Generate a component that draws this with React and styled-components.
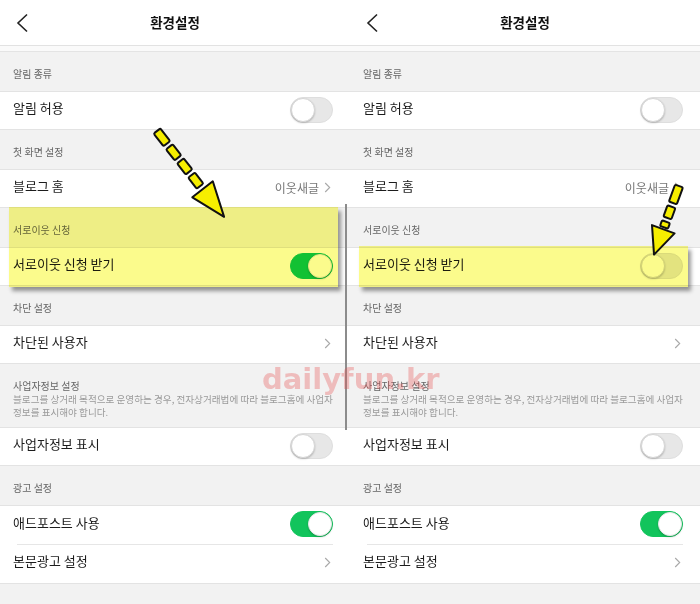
import React from 'react';
import styled, { createGlobalStyle } from 'styled-components';

const Global = createGlobalStyle`
  html, body { margin: 0; padding: 0; background: #fff; }
  body { font-family: "Noto Sans CJK KR", "Noto Sans", sans-serif; }
`;

const Page = styled.div`
  position: relative;
  display: flex;
  width: 700px;
  height: 604px;
  overflow: hidden;
  background: #fff;
`;

const Phone = styled.div`
  position: relative;
  width: 350px;
  flex: none;
  display: flex;
  flex-direction: column;
  background: #f2f2f2;
`;

const Header = styled.header`
  flex: none;
  height: 45px;
  background: #fff;
  border-bottom: 1px solid #e2e2e2;
  display: grid;
  grid-template-columns: 48px 1fr 48px;
  align-items: center;
`;

const BackBtn = styled.div`
  display: flex;
  align-items: center;
  padding-left: 16px;
`;

const Title = styled.h1`
  margin: 0 0 2px;
  text-align: center;
  font-size: 13.5px;
  font-weight: 700;
  color: #111;
`;

const Strip = styled.div`
  flex: none;
  height: 5px;
  background: #fafafa;
  border-bottom: 1px solid #e4e4e4;
`;

const Section = styled.div`
  flex: none;
  box-sizing: border-box;
  display: flex;
  flex-direction: column;
  justify-content: flex-end;
  height: ${p => (p.$tall ? '63px' : '39px')};
  padding: ${p => (p.$tall ? '15px 13px 8px' : '0 13px 10px')};
  background: #f2f2f2;
`;

const Label = styled.div`
  font-size: 10px;
  line-height: 14px;
  color: #666;
`;

const Desc = styled.div`
  font-size: 9.6px;
  line-height: 13px;
  color: #9a9a9a;
  white-space: nowrap;
`;

const Group = styled.div`
  flex: none;
  background: #fff;
  border-top: 1px solid #e3e3e3;
  border-bottom: 1px solid #e3e3e3;
`;

const Row = styled.div`
  position: relative;
  box-sizing: border-box;
  height: 37px;
  display: flex;
  align-items: center;
  justify-content: space-between;
  padding: 0 17px 0 13px;
  &:not(:only-child) {
    height: 38px;
  }
  & + & {
    height: 39px;
  }
  & + &::before {
    content: '';
    position: absolute;
    top: 0;
    left: 17px;
    right: 17px;
    height: 1px;
    background: #e6e6e6;
  }
`;

const RowLabel = styled.span`
  font-size: 13px;
  line-height: 18px;
  margin-top: -5px;
  color: #1c1c1c;
`;

const Value = styled.span`
  display: flex;
  align-items: center;
  gap: 5px;
  margin-top: -3px;
  font-size: 12px;
  color: #777;
  padding-right: 2px;
`;

const Toggle = styled.span`
  position: relative;
  box-sizing: border-box;
  width: 43px;
  height: 26px;
  margin-top: -2px;
  border-radius: 13px;
  background: ${p => (p.$on ? '#12c45c' : '#e7e7e7')};
  border: 1px solid ${p => (p.$on ? '#12c45c' : '#dedede')};
  &::after {
    content: '';
    position: absolute;
    top: 0;
    left: ${p => (p.$on ? '17px' : '0')};
    width: 24px;
    height: 24px;
    border-radius: 50%;
    background: #fff;
    box-shadow: 0 1px 2px rgba(0, 0, 0, 0.22);
    box-sizing: border-box;
    border: 1px solid ${p => (p.$on ? '#e8e8e8' : '#d6d6d6')};
  }
`;

const Marked = styled.div`
  position: relative;
  flex: none;
  display: flex;
  flex-direction: column;
`;

const Highlight = styled.div`
  position: absolute;
  top: -1px;
  bottom: -1px;
  left: ${p => p.$l}px;
  right: ${p => p.$r}px;
  background: #fbfb8c;
  mix-blend-mode: multiply;
  box-shadow: 3px 4px 4px rgba(0, 0, 0, 0.4);
  pointer-events: none;
`;

const ScrollBar = styled.div`
  position: absolute;
  left: 345px;
  top: 204px;
  width: 2px;
  height: 226px;
  background: #8c8c8c;
`;

const Filler = styled.div`
  flex: 1;
  background: #f2f2f2;
`;

const Watermark = styled.div`
  position: absolute;
  left: 262px;
  top: 365px;
  font-family: "DejaVu Sans", sans-serif;
  font-weight: 700;
  font-size: 29px;
  line-height: 29px;
  color: rgba(230, 80, 80, 0.33);
  pointer-events: none;
  white-space: nowrap;
`;

const ArrowLayer = styled.svg`
  position: absolute;
  left: 0;
  top: 0;
  width: 700px;
  height: 604px;
  pointer-events: none;
  fill: #f6ee00;
  stroke: #111;
  stroke-width: 2;
  stroke-linejoin: round;
`;

const Chevron = () => (
  <svg width="7" height="11" viewBox="0 0 7 11">
    <path d="M1.2 1 L5.7 5.5 L1.2 10" fill="none" stroke="#a8a8a8" strokeWidth="1.1" />
  </svg>
);

const BackIcon = () => (
  <svg width="13" height="20" viewBox="0 0 13 20">
    <path d="M11 1.5 L2 10 L11 18.5" fill="none" stroke="#222" strokeWidth="1.6" />
  </svg>
);

function DashedArrow({ x, y, angle, dashes, head, thick = 8.4 }) {
  return (
    <g transform={`translate(${x} ${y}) rotate(${angle})`}>
      {dashes.map(([a, b], i) => (
        <rect key={i} x={a} y={-thick / 2} width={b - a} height={thick} rx={1.5} />
      ))}
      <polygon points={`${head[0]},${-head[2]} ${head[1]},0 ${head[0]},${head[2]}`} />
    </g>
  );
}

function SettingsScreen({ neighborOn, mark, scrollbar }) {
  const neighborSection = (
    <Section>
      <Label>서로이웃 신청</Label>
    </Section>
  );
  const neighborGroup = (
    <Group>
      <Row>
        <RowLabel>서로이웃 신청 받기</RowLabel>
        <Toggle $on={neighborOn} />
      </Row>
    </Group>
  );
  return (
    <Phone>
      <Header>
        <BackBtn>
          <BackIcon />
        </BackBtn>
        <Title>환경설정</Title>
        <span />
      </Header>
      <Strip />
      <Section>
        <Label>알림 종류</Label>
      </Section>
      <Group>
        <Row>
          <RowLabel>알림 허용</RowLabel>
          <Toggle />
        </Row>
      </Group>
      <Section>
        <Label>첫 화면 설정</Label>
      </Section>
      <Group>
        <Row>
          <RowLabel>블로그 홈</RowLabel>
          <Value>
            이웃새글
            <Chevron />
          </Value>
        </Row>
      </Group>
      {mark === 'both' ? (
        <Marked>
          {neighborSection}
          {neighborGroup}
          <Highlight $l={9} $r={12} />
        </Marked>
      ) : (
        <>
          {neighborSection}
          <Marked>
            {neighborGroup}
            <Highlight $l={9} $r={12} />
          </Marked>
        </>
      )}
      <Section>
        <Label>차단 설정</Label>
      </Section>
      <Group>
        <Row>
          <RowLabel>차단된 사용자</RowLabel>
          <Value>
            <Chevron />
          </Value>
        </Row>
      </Group>
      <Section $tall>
        <Label>사업자정보 설정</Label>
        <Desc>
          블로그를 상거래 목적으로 운영하는 경우, 전자상거래법에 따라 블로그홈에 사업자
          <br />
          정보를 표시해야 합니다.
        </Desc>
      </Section>
      <Group>
        <Row>
          <RowLabel>사업자정보 표시</RowLabel>
          <Toggle />
        </Row>
      </Group>
      <Section>
        <Label>광고 설정</Label>
      </Section>
      <Group>
        <Row>
          <RowLabel>애드포스트 사용</RowLabel>
          <Toggle $on />
        </Row>
        <Row>
          <RowLabel>본문광고 설정</RowLabel>
          <Value>
            <Chevron />
          </Value>
        </Row>
      </Group>
      <Filler />
      {scrollbar && <ScrollBar />}
    </Phone>
  );
}

export default function App() {
  return (
    <>
      <Global />
      <Page>
        <SettingsScreen neighborOn mark="both" scrollbar />
        <SettingsScreen neighborOn={false} mark="row" />
        <Watermark>dailyfun.kr</Watermark>
        <ArrowLayer viewBox="0 0 700 604">
          <DashedArrow
            x={157}
            y={131}
            angle={52}
            dashes={[[0, 16], [20, 34], [38, 52], [56, 70]]}
            head={[74, 109, 13]}
          />
          <DashedArrow
            x={679}
            y={186}
            angle={110}
            dashes={[[0, 18], [22, 34], [38, 44]]}
            head={[46, 73, 12]}
          />
        </ArrowLayer>
      </Page>
    </>
  );
}
